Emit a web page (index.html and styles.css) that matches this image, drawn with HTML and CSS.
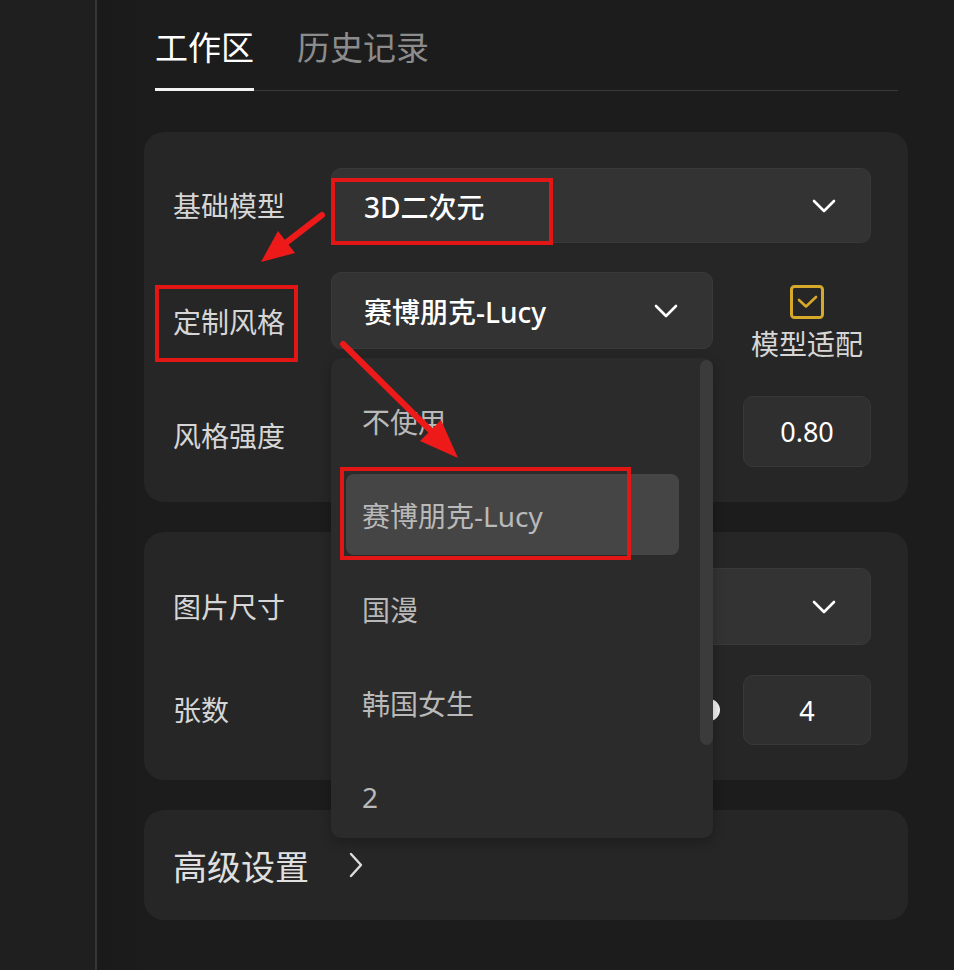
FILE: index.html
```html
<!DOCTYPE html>
<html lang="zh-CN">
<head>
<meta charset="utf-8">
<title>工作区</title>
<link rel="stylesheet" href="styles.css">
</head>
<body>
<div class="app">
  <aside class="sidebar"></aside>
  <main class="main">
    <nav class="tabs">
      <div class="tab active">工作区</div>
      <div class="tab">历史记录</div>
    </nav>

    <section class="card card-model">
      <div class="row row-1">
        <div class="label">基础模型</div>
        <div class="select grow">
          <span class="value">3D二次元</span>
          <svg class="chev" width="24" height="14" viewBox="0 0 24 14"><path d="M2 2 L12 12 L22 2"/></svg>
        </div>
      </div>
      <div class="row row-2">
        <div class="label label-low">定制风格</div>
        <div class="select-wrap">
          <div class="select">
            <span class="value">赛博朋克-Lucy</span>
            <svg class="chev" width="24" height="14" viewBox="0 0 24 14"><path d="M2 2 L12 12 L22 2"/></svg>
          </div>
          <div class="dropdown">
            <div class="options">
              <div class="option">不使用</div>
              <div class="option selected">赛博朋克-Lucy</div>
              <div class="option">国漫</div>
              <div class="option">韩国女生</div>
              <div class="option">2</div>
            </div>
            <div class="scrollbar"></div>
          </div>
        </div>
        <div class="check-group">
          <svg class="checkbox" width="34" height="34" viewBox="0 0 34 34"><rect x="1.5" y="1.5" width="31" height="31" rx="3"/><path d="M9 15 L16 21.5 L26 12"/></svg>
          <span class="check-label">模型适配</span>
        </div>
      </div>
      <div class="row row-3">
        <div class="label label-low2">风格强度</div>
        <div class="slider">
          <div class="track" style="width: 80%"></div>
          <div class="thumb"></div>
          <div class="track rest"></div>
        </div>
        <div class="numbox">0.80</div>
      </div>
    </section>

    <section class="card card-size">
      <div class="row row-s1">
        <div class="label">图片尺寸</div>
        <div class="select grow">
          <span class="value"></span>
          <svg class="chev" width="24" height="14" viewBox="0 0 24 14"><path d="M2 2 L12 12 L22 2"/></svg>
        </div>
      </div>
      <div class="row row-s2">
        <div class="label">张数</div>
        <div class="slider">
          <div class="track rest"></div>
          <div class="thumb"></div>
        </div>
        <div class="numbox short">4</div>
      </div>
    </section>

    <section class="card card-adv">
      <span class="adv-title">高级设置</span>
      <svg class="adv-chev" width="14" height="26" viewBox="0 0 14 26"><path d="M2 2 L12 13 L2 24"/></svg>
    </section>
  </main>
</div>

<svg class="annotations" width="954" height="970" viewBox="0 0 954 970">
  <g class="boxes">
    <rect x="333" y="180" width="218" height="63"/>
    <rect x="157" y="287" width="139" height="73"/>
    <rect x="342" y="469" width="287" height="89"/>
  </g>
  <g class="arrows">
    <line x1="322" y1="215" x2="287" y2="242"/>
    <polygon points="261,262 295,253 278,231"/>
    <line x1="343" y1="344" x2="432" y2="432"/>
    <polygon points="458,458 420,441 441,420"/>
  </g>
</svg>
</body>
</html>
```

FILE: styles.css
```css
* { box-sizing: border-box; }

html, body {
  margin: 0;
  padding: 0;
  background: #1c1c1c;
}

body {
  position: relative;
  width: 954px;
  height: 970px;
  overflow: hidden;
  font-family: "Noto Sans", "Noto Sans CJK SC", sans-serif;
  color: #d8d8d8;
}

.app {
  display: flex;
  height: 970px;
}

.sidebar {
  width: 97px;
  flex-shrink: 0;
  background: #1f1f1f;
  border-right: 2px solid #363636;
}

.main {
  flex: 1;
  padding: 0 46px 0 47px;
  background: linear-gradient(to right, #1a1a1a, #1c1c1c 60px);
}

/* Tabs */
.tabs {
  display: flex;
  gap: 43px;
  margin: 0 10px 0 11px;
  padding-top: 25px;
  border-bottom: 1px solid #3a3a3a;
}

.tab {
  font-size: 33px;
  line-height: 46px;
  padding-bottom: 17px;
  color: #8c8c8c;
}

.tab.active {
  color: #ffffff;
  border-bottom: 3px solid #f2f2f2;
  margin-bottom: -1px;
}

/* Cards */
.card {
  background: #262626;
  border-radius: 20px;
  padding: 36px 37px 35px 29px;
  margin-top: 30px;
}

.card-model {
  margin-top: 41px;
  display: flex;
  flex-direction: column;
}

.card-size {
  display: flex;
  flex-direction: column;
}

.row {
  display: flex;
  align-items: center;
}

.row-1 { height: 75px; }
.row-2 { height: 90px; margin-top: 29px; align-items: flex-start; gap: 30px; }
.row-3 { height: 71px; margin-top: 34px; gap: 30px; }
.row-s1 { height: 77px; }
.row-s2 { height: 70px; margin-top: 30px; gap: 23px; }

.label {
  width: 158px;
  flex-shrink: 0;
  font-size: 28px;
  line-height: 40px;
  color: #d6d6d6;
}

.row-2 .label, .row-3 .label { margin-right: -30px; }
.row-s2 .label { margin-right: -23px; }

.label-low { padding-top: 30px; }
.label-low2 { padding-top: 8px; }

/* Select */
.select {
  display: flex;
  align-items: center;
  justify-content: space-between;
  height: 75px;
  padding: 0 34px 0 32px;
  background: #333333;
  border: 1px solid #393939;
  border-radius: 10px;
}

.select.grow { flex: 1; }
.row-s1 .select { height: 77px; }

.value {
  font-size: 28px;
  font-weight: 500;
  color: #ffffff;
}

.chev path {
  fill: none;
  stroke: #ffffff;
  stroke-width: 2.6;
  stroke-linecap: round;
  stroke-linejoin: round;
}

.select-wrap {
  position: relative;
  width: 382px;
  flex-shrink: 0;
}

.select-wrap .select { height: 77px; }

/* Dropdown */
.dropdown {
  position: absolute;
  top: calc(100% + 9px);
  left: 0;
  width: 382px;
  height: 480px;
  display: flex;
  background: #2b2b2b;
  border-radius: 10px;
  z-index: 5;
  box-shadow: 0 4px 12px rgba(0, 0, 0, 0.25);
}

.options {
  width: 333px;
  margin-left: 15px;
  padding-top: 22px;
  display: flex;
  flex-direction: column;
  gap: 13px;
}

.option {
  height: 81px;
  display: flex;
  align-items: center;
  padding-left: 16px;
  border-radius: 8px;
  font-size: 28px;
  color: #b9b9b9;
}

.option.selected {
  background: #454545;
}

.scrollbar {
  width: 13px;
  height: 385px;
  margin: 2px 0 0 21px;
  border-radius: 7px;
  background: #3b3b3b;
}

/* Checkbox */
.check-group {
  width: 128px;
  display: flex;
  flex-direction: column;
  align-items: center;
  padding-top: 13px;
  gap: 6px;
}

.checkbox rect {
  fill: none;
  stroke: #d6a92b;
  stroke-width: 3;
}

.checkbox path {
  fill: none;
  stroke: #d6a92b;
  stroke-width: 2.6;
  stroke-linecap: round;
  stroke-linejoin: round;
}

.check-label {
  font-size: 28px;
  line-height: 38px;
  color: #d6d6d6;
  white-space: nowrap;
}

/* Slider */
.slider {
  flex: 1;
  display: flex;
  align-items: center;
  height: 24px;
}

.track {
  height: 4px;
  border-radius: 2px;
  background: #555555;
  flex-shrink: 0;
}

.track.rest { flex: 1; flex-shrink: 1; }

.thumb {
  width: 22px;
  height: 22px;
  border-radius: 50%;
  background: #f2f2f2;
  flex-shrink: 0;
}

/* Number box */
.numbox {
  width: 128px;
  height: 71px;
  flex-shrink: 0;
  display: flex;
  align-items: center;
  justify-content: center;
  background: #2f2f2f;
  border: 1px solid #383838;
  border-radius: 10px;
  font-size: 27px;
  color: #ffffff;
}

.numbox.short { height: 70px; }

/* Advanced */
.card-adv {
  height: 110px;
  display: flex;
  align-items: center;
  gap: 40px;
  padding: 0 0 0 29px;
}

.adv-title {
  font-size: 34px;
  color: #e0e0e0;
}

.adv-chev path {
  fill: none;
  stroke: #dddddd;
  stroke-width: 2.4;
  stroke-linecap: round;
  stroke-linejoin: round;
}

/* Annotation overlay */
.annotations {
  position: absolute;
  top: 0;
  left: 0;
  z-index: 20;
  pointer-events: none;
}

.boxes rect {
  fill: none;
  stroke: #e31616;
  stroke-width: 4;
}

.arrows line {
  stroke: #ee1a1a;
  stroke-width: 6;
  stroke-linecap: round;
}

.arrows polygon {
  fill: #ee1a1a;
}
```
